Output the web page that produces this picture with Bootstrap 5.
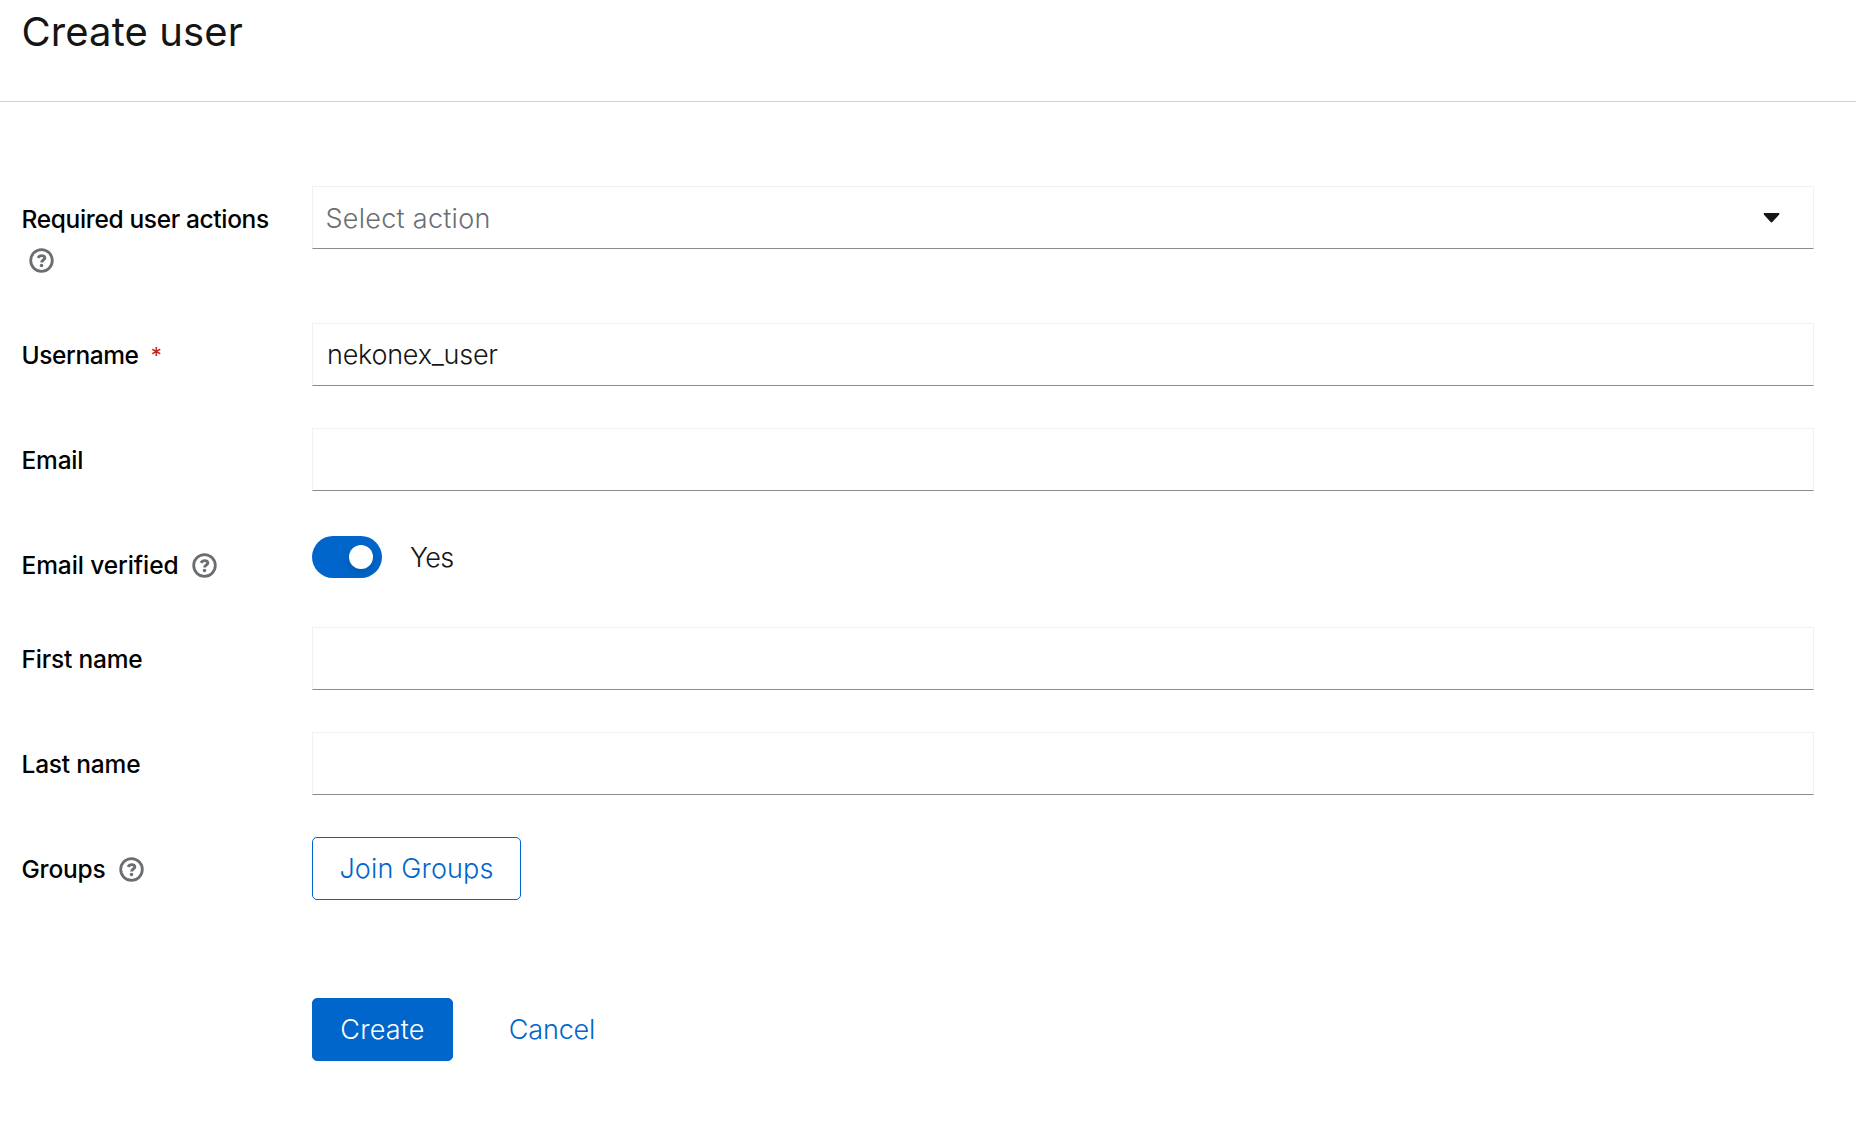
<!DOCTYPE html>
<html lang="en">
<head>
<meta charset="utf-8">
<title>Create user</title>
<link href="https://cdn.jsdelivr.net/npm/bootstrap@5.3.0/dist/css/bootstrap.min.css" rel="stylesheet">
<style>
body{font-family:Inter,"Open Sans",sans-serif;color:#151515;background:#fff;font-size:27px;font-weight:300;overflow:hidden}
.page-head{height:102px;border-bottom:1px solid #d2d2d2;padding:2px 0 0 21.5px}
.page-title{font-size:40px;font-weight:400;line-height:60px;margin:0;letter-spacing:.1px}
.user-form{padding:84px 42px 0 21.5px;display:flex;flex-direction:column;gap:42px}
.field-label{width:290.5px;flex:none;padding:11px 0 0;font-size:24.5px;font-weight:500;line-height:42px;letter-spacing:-.2px;color:#000}
.label-long{letter-spacing:-.35px;padding-top:12px;height:95px}
.label-long svg{position:relative;top:-1px}
.label-user{letter-spacing:-.4px}
.field-label svg{width:25px;height:25px;vertical-align:-4px;display:inline-block}
.help-wrap{margin-left:7px;display:inline-block}
.verified-row{height:52px}
.verified-row .field-label{letter-spacing:-.1px}
.req{color:#c9190b;font-size:22px;line-height:20px;margin-left:6px;font-weight:400;display:inline-block;transform:translateY(-1px)}
.form-control.field{height:63px;border:1px solid #f0f0f0;border-bottom-color:#8a8d90;border-radius:0;padding:0 14px;font-size:27px;font-weight:300;letter-spacing:-.25px;color:#151515;line-height:61px;box-shadow:none;background:#fff}
.form-control.select-field{color:#6a6e73;padding:0 33px 0 12.5px;letter-spacing:.27px}
.select-text{padding-top:2px}
.toggle{width:70px;height:42px;border-radius:21px;background:#06c;padding-right:9px;margin-top:3px}
.knob{width:24px;height:24px;border-radius:50%;background:#fff;box-shadow:0 4px 12px rgba(0,0,0,.16)}
.toggle-text{margin:4px 0 0 28px;line-height:42px;letter-spacing:-.6px}
.btn.act{height:63px;border-radius:5px;font-size:27px;font-weight:300;line-height:61px;padding:0;--bs-btn-border-color:#06c}
.btn.act-join{width:209px;border-color:#06c;color:#06c;letter-spacing:.15px}
.btn.act-create{width:141px;background:#06c;color:#fff;letter-spacing:.2px}
.btn.act-cancel{width:142px;color:#06c;border:0;margin-left:28px;letter-spacing:-.15px}
.actions{margin:56px 0 0 290.5px}
</style>
<script src="https://cdn.jsdelivr.net/npm/bootstrap@5.3.0/dist/js/bootstrap.bundle.min.js"></script>
</head>
<body>
<svg class="d-none"><symbol id="help" viewBox="0 0 25 25"><circle cx="12.5" cy="12.5" r="10.8" fill="none" stroke="#6a6e73" stroke-width="2.8"/><path d="M9 9.9C9.9 8.2 11.1 7.6 12.7 7.6C14.6 7.6 15.8 8.6 15.8 10C15.8 12.1 12.6 12 12.6 14.4" fill="none" stroke="#6a6e73" stroke-width="2.9"/><circle cx="12.5" cy="17.4" r="1.75" fill="#6a6e73"/></symbol></svg>
<header class="page-head"><h1 class="page-title">Create user</h1></header>
<form class="user-form">
  <div class="d-flex"><label class="field-label label-long">Required user actions<br><span class="help-wrap"><svg><use href="#help"/></svg></span></label>
    <div class="form-control field select-field d-flex align-items-center justify-content-between"><span class="select-text">Select action</span><svg width="17" height="10" viewBox="0 0 17 10"><path d="M1.2 0H15.8Q17 .6 16 1.8L9.4 9Q8.5 9.9 7.6 9L1 1.8Q0 .6 1.2 0Z" fill="#151515"/></svg></div></div>
  <div class="d-flex"><label class="field-label label-user" for="username">Username <span class="req">*</span></label><input id="username" class="form-control field" value="nekonex_user"></div>
  <div class="d-flex"><label class="field-label" for="email">Email</label><input id="email" class="form-control field"></div>
  <div class="d-flex align-items-start verified-row"><label class="field-label">Email verified <span class="help-wrap"><svg><use href="#help"/></svg></span></label><span class="toggle d-flex align-items-center justify-content-end"><span class="knob"></span></span><span class="toggle-text">Yes</span></div>
  <div class="d-flex"><label class="field-label" for="first">First name</label><input id="first" class="form-control field"></div>
  <div class="d-flex"><label class="field-label" for="last">Last name</label><input id="last" class="form-control field"></div>
  <div class="d-flex"><label class="field-label">Groups <span class="help-wrap"><svg><use href="#help"/></svg></span></label><button type="button" class="btn act act-join">Join Groups</button></div>
  <div class="d-flex actions"><button type="button" class="btn act act-create">Create</button><button type="button" class="btn act act-cancel">Cancel</button></div>
</form>
</body>
</html>
